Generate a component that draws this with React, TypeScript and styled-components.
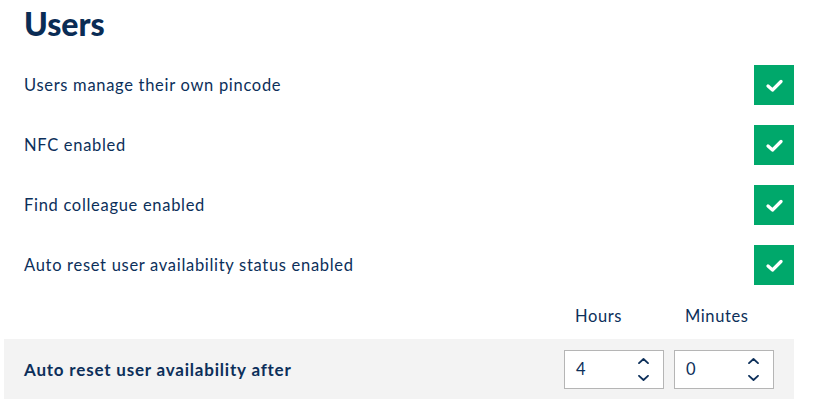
import React from "react";
import styled, {createGlobalStyle} from "styled-components";

const GlobalStyle = createGlobalStyle`
    body {
        margin: 0;
        background: #ffffff;
        font-family: "Lato", "Noto Sans", sans-serif;
        color: #0c2f5a;
    }
`;

const Panel = styled.div`
    width: 790px;
    margin-left: 4px;
`;

const Title = styled.h1`
    margin: 0;
    height: 55px;
    padding: 5px 0 0 20px;
    box-sizing: border-box;
    font-size: 32px;
    font-weight: 900;
    color: #0a2c55;
    line-height: 38px;
`;

const Row = styled.div`
    height: 60px;
    padding-left: 20px;
    display: flex;
    align-items: center;
    justify-content: space-between;
    font-size: 16.5px;
    letter-spacing: 0.7px;
`;

const Check = styled.div`
    width: 40px;
    height: 40px;
    background: #00a86b;
    display: flex;
    align-items: center;
    justify-content: center;
`;

const LabelRow = styled.div`
    height: 44px;
    display: flex;
    justify-content: flex-end;
    align-items: center;
    gap: 10px;
    padding-right: 20px;
`;

const ColLabel = styled.div`
    width: 100px;
    padding: 0 0 2px 11px;
    box-sizing: border-box;
    font-size: 16.5px;
    letter-spacing: 0.6px;
`;

const GreyRow = styled.div`
    height: 60px;
    background: #f3f3f3;
    display: flex;
    align-items: center;
    padding: 0 20px;
`;

const BoldLabel = styled.div`
    flex: 1;
    font-size: 17px;
    font-weight: 700;
    letter-spacing: 0.8px;
`;

const Inputs = styled.div`
    display: flex;
    gap: 10px;
`;

const NumBox = styled.div`
    width: 100px;
    height: 39px;
    box-sizing: border-box;
    border: 1px solid #b5b5b5;
    background: #ffffff;
    display: flex;
    align-items: center;
    justify-content: space-between;
    padding: 0 14px 0 11px;
    font-size: 16.5px;
`;

const Spin = styled.div`
    display: flex;
    flex-direction: column;
    gap: 11px;
`;

const CheckIcon = () => (
    <svg width="17" height="13" viewBox="0 0 17 13">
        <path d="M2 7 L6.5 11 L15 2.5" fill="none" stroke="#ffffff" strokeWidth="3.2" strokeLinecap="round" strokeLinejoin="round"/>
    </svg>
);

const Chevron = ({up}: {up?: boolean}) => (
    <svg width="11" height="6" viewBox="0 0 11 6" style={{display: "block"}}>
        <path d={up ? "M1 5.2 L5.5 1 L10 5.2" : "M1 0.8 L5.5 5 L10 0.8"} fill="none" stroke="#0c2f5a" strokeWidth="1.8" strokeLinecap="round" strokeLinejoin="round"/>
    </svg>
);

const settings = [
    "Users manage their own pincode",
    "NFC enabled",
    "Find colleague enabled",
    "Auto reset user availability status enabled",
];

const App = () => {
    return (
        <>
            <GlobalStyle/>
            <Panel>
                <Title>Users</Title>
                {settings.map(s => (
                    <Row key={s}>
                        <span>{s}</span>
                        <Check><CheckIcon/></Check>
                    </Row>
                ))}
                <LabelRow>
                    <ColLabel>Hours</ColLabel>
                    <ColLabel>Minutes</ColLabel>
                </LabelRow>
                <GreyRow>
                    <BoldLabel>Auto reset user availability after</BoldLabel>
                    <Inputs>
                        <NumBox>4<Spin><Chevron up/><Chevron/></Spin></NumBox>
                        <NumBox>0<Spin><Chevron up/><Chevron/></Spin></NumBox>
                    </Inputs>
                </GreyRow>
            </Panel>
        </>
    )
}
export default App;
